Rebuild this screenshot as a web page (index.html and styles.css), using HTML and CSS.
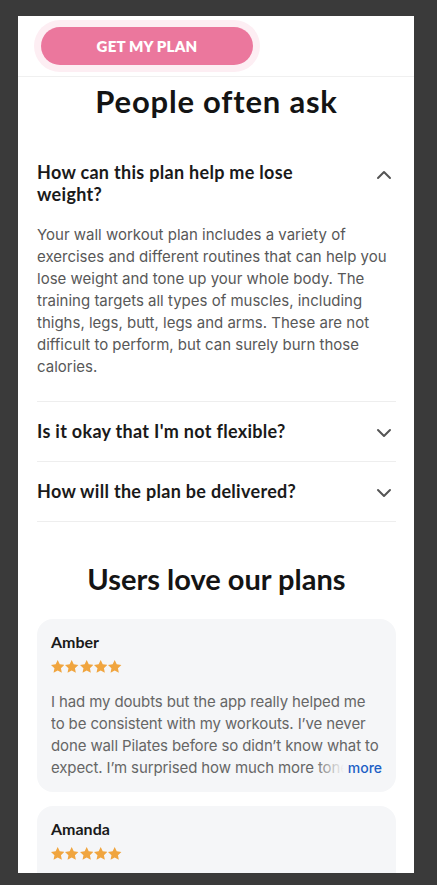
FILE: index.html
```html
<!DOCTYPE html>
<html lang="en">
<head>
<meta charset="utf-8">
<title>People often ask</title>
<link rel="stylesheet" href="styles.css">
</head>
<body>
<div class="frame">
  <header class="topbar">
    <button class="cta" type="button">GET MY PLAN</button>
  </header>
  <main class="content">
    <h2 class="title">People often ask</h2>
    <div class="faq">
      <div class="faq-item open">
        <div class="q">
          <span class="q-text">How can this plan help me lose weight?</span>
          <svg class="chev" viewBox="0 0 24 24" width="24" height="24"><path d="M6 15l6-6 6 6" fill="none" stroke="#555" stroke-width="2" stroke-linecap="round" stroke-linejoin="round"/></svg>
        </div>
        <p class="a">Your wall workout plan includes a variety of exercises and different routines that can help you lose weight and tone up your whole body. The training targets all types of muscles, including thighs, legs, butt, legs and arms. These are not difficult to perform, but can surely burn those calories.</p>
      </div>
      <div class="faq-item">
        <div class="q">
          <span class="q-text">Is it okay that I'm not flexible?</span>
          <svg class="chev" viewBox="0 0 24 24" width="24" height="24"><path d="M6 9l6 6 6-6" fill="none" stroke="#555" stroke-width="2" stroke-linecap="round" stroke-linejoin="round"/></svg>
        </div>
      </div>
      <div class="faq-item">
        <div class="q">
          <span class="q-text">How will the plan be delivered?</span>
          <svg class="chev" viewBox="0 0 24 24" width="24" height="24"><path d="M6 9l6 6 6-6" fill="none" stroke="#555" stroke-width="2" stroke-linecap="round" stroke-linejoin="round"/></svg>
        </div>
      </div>
    </div>

    <h2 class="title title-users">Users love our plans</h2>
    <div class="reviews">
      <article class="review">
        <div class="name">Amber</div>
        <div class="stars">
          <svg class="star" viewBox="2.5 2.5 19 18.1" preserveAspectRatio="none"><path d="M12 2.5l2.9 6.1 6.6.8-4.9 4.6 1.3 6.6L12 17.3l-5.9 3.3 1.3-6.6-4.9-4.6 6.6-.8z"/></svg>
          <svg class="star" viewBox="2.5 2.5 19 18.1" preserveAspectRatio="none"><path d="M12 2.5l2.9 6.1 6.6.8-4.9 4.6 1.3 6.6L12 17.3l-5.9 3.3 1.3-6.6-4.9-4.6 6.6-.8z"/></svg>
          <svg class="star" viewBox="2.5 2.5 19 18.1" preserveAspectRatio="none"><path d="M12 2.5l2.9 6.1 6.6.8-4.9 4.6 1.3 6.6L12 17.3l-5.9 3.3 1.3-6.6-4.9-4.6 6.6-.8z"/></svg>
          <svg class="star" viewBox="2.5 2.5 19 18.1" preserveAspectRatio="none"><path d="M12 2.5l2.9 6.1 6.6.8-4.9 4.6 1.3 6.6L12 17.3l-5.9 3.3 1.3-6.6-4.9-4.6 6.6-.8z"/></svg>
          <svg class="star" viewBox="2.5 2.5 19 18.1" preserveAspectRatio="none"><path d="M12 2.5l2.9 6.1 6.6.8-4.9 4.6 1.3 6.6L12 17.3l-5.9 3.3 1.3-6.6-4.9-4.6 6.6-.8z"/></svg>
        </div>
        <div class="text-wrap">
          <p class="text">I had my doubts but the app really helped me to be consistent with my workouts. I’ve never done wall Pilates before so didn’t know what to expect. I’m surprised how much more toned and stronger I feel after just a few weeks.</p>
          <span class="more">more</span>
        </div>
      </article>
      <article class="review">
        <div class="name">Amanda</div>
        <div class="stars">
          <svg class="star" viewBox="2.5 2.5 19 18.1" preserveAspectRatio="none"><path d="M12 2.5l2.9 6.1 6.6.8-4.9 4.6 1.3 6.6L12 17.3l-5.9 3.3 1.3-6.6-4.9-4.6 6.6-.8z"/></svg>
          <svg class="star" viewBox="2.5 2.5 19 18.1" preserveAspectRatio="none"><path d="M12 2.5l2.9 6.1 6.6.8-4.9 4.6 1.3 6.6L12 17.3l-5.9 3.3 1.3-6.6-4.9-4.6 6.6-.8z"/></svg>
          <svg class="star" viewBox="2.5 2.5 19 18.1" preserveAspectRatio="none"><path d="M12 2.5l2.9 6.1 6.6.8-4.9 4.6 1.3 6.6L12 17.3l-5.9 3.3 1.3-6.6-4.9-4.6 6.6-.8z"/></svg>
          <svg class="star" viewBox="2.5 2.5 19 18.1" preserveAspectRatio="none"><path d="M12 2.5l2.9 6.1 6.6.8-4.9 4.6 1.3 6.6L12 17.3l-5.9 3.3 1.3-6.6-4.9-4.6 6.6-.8z"/></svg>
          <svg class="star" viewBox="2.5 2.5 19 18.1" preserveAspectRatio="none"><path d="M12 2.5l2.9 6.1 6.6.8-4.9 4.6 1.3 6.6L12 17.3l-5.9 3.3 1.3-6.6-4.9-4.6 6.6-.8z"/></svg>
        </div>
        <div class="text-wrap">
          <p class="text">This is the first workout plan I actually stuck with. The exercises are easy to follow and I can do them at home.</p>
        </div>
      </article>
    </div>
  </main>
</div>
</body>
</html>
```

FILE: styles.css
```css
html, body {
  margin: 0;
  padding: 0;
}
body {
  background: #3a3a3a;
  height: 885px;
  overflow: hidden;
}
.frame {
  margin: 16px 0 0 18px;
  width: 396px;
  height: 857px;
  background: #ffffff;
  overflow: hidden;
}
.topbar {
  height: 60px;
  border-bottom: 1px solid #f0f0f0;
  display: flex;
  align-items: flex-start;
}
.cta {
  margin: 11px 0 0 23px;
  width: 212px;
  height: 38px;
  border: 0;
  border-radius: 19px;
  background: #eb779d;
  box-shadow: 0 0 0 7px #fdeef3;
  color: #ffffff;
  font-family: "Lato", "Liberation Sans", sans-serif;
  font-weight: 800;
  font-size: 15px;
  letter-spacing: 0.2px;
  padding: 0;
}
.content {
  padding: 0 18px 0 19px;
}
.title {
  margin: 6px 0 0;
  font-family: "Lato", "Liberation Sans", sans-serif;
  font-weight: 700;
  font-size: 31px;
  letter-spacing: 0.8px;
  line-height: 36px;
  color: #141414;
  text-align: center;
}
.faq {
  margin-top: 23px;
}
.faq-item {
  border-top: 1px solid #eeeeee;
  padding: 18px 0 19px;
}
.faq-item:first-child {
  border-top: 0;
  padding-top: 19px;
  padding-bottom: 23px;
}
.faq-item:last-child {
  border-bottom: 1px solid #eeeeee;
}
.q {
  display: flex;
  align-items: flex-start;
  gap: 24px;
}
.q-text {
  flex: 1;
  font-family: "Lato", "Liberation Sans", sans-serif;
  font-weight: 700;
  font-size: 18px;
  letter-spacing: 0.3px;
  line-height: 22px;
  color: #1a1a1a;
}
.chev {
  flex: none;
  display: block;
  margin: 1px 0 -3px;
}
.open .chev {
  margin: 2px 0 0;
}
.a {
  margin: 19px 0 0;
  font-family: "Inter", "Liberation Sans", sans-serif;
  font-size: 15px;
  line-height: 22px;
  color: #585858;
}
.title-users {
  margin-top: 39px;
  font-size: 29px;
  letter-spacing: 0;
}
.reviews {
  margin-top: 22px;
  display: flex;
  flex-direction: column;
  gap: 14px;
}
.review {
  background: #f5f6f8;
  border-radius: 16px;
  padding: 13px 14px 13px 14px;
}
.name {
  font-family: "Lato", "Liberation Sans", sans-serif;
  font-weight: 700;
  font-size: 16px;
  line-height: 20px;
  color: #1a1a1a;
}
.stars {
  margin-top: 8px;
  display: flex;
  gap: 0.9px;
}
.star {
  width: 13.4px;
  height: 12.8px;
  fill: #f0a53f;
  display: block;
}
.text-wrap {
  position: relative;
  margin-top: 18px;
}
.text {
  margin: 0;
  padding-right: 1.5px;
  font-family: "Inter", "Liberation Sans", sans-serif;
  font-size: 15px;
  letter-spacing: -0.12px;
  line-height: 22px;
  color: #666666;
  max-height: 88px;
  overflow: hidden;
}
.more {
  position: absolute;
  right: 0;
  bottom: 0;
  height: 22px;
  line-height: 22px;
  padding-left: 34px;
  background: linear-gradient(to right, rgba(245,246,248,0) 0, #f5f6f8 30px);
  font-family: "Inter", "Liberation Sans", sans-serif;
  font-size: 14px;
  font-weight: 500;
  color: #1d5fc5;
}
```
